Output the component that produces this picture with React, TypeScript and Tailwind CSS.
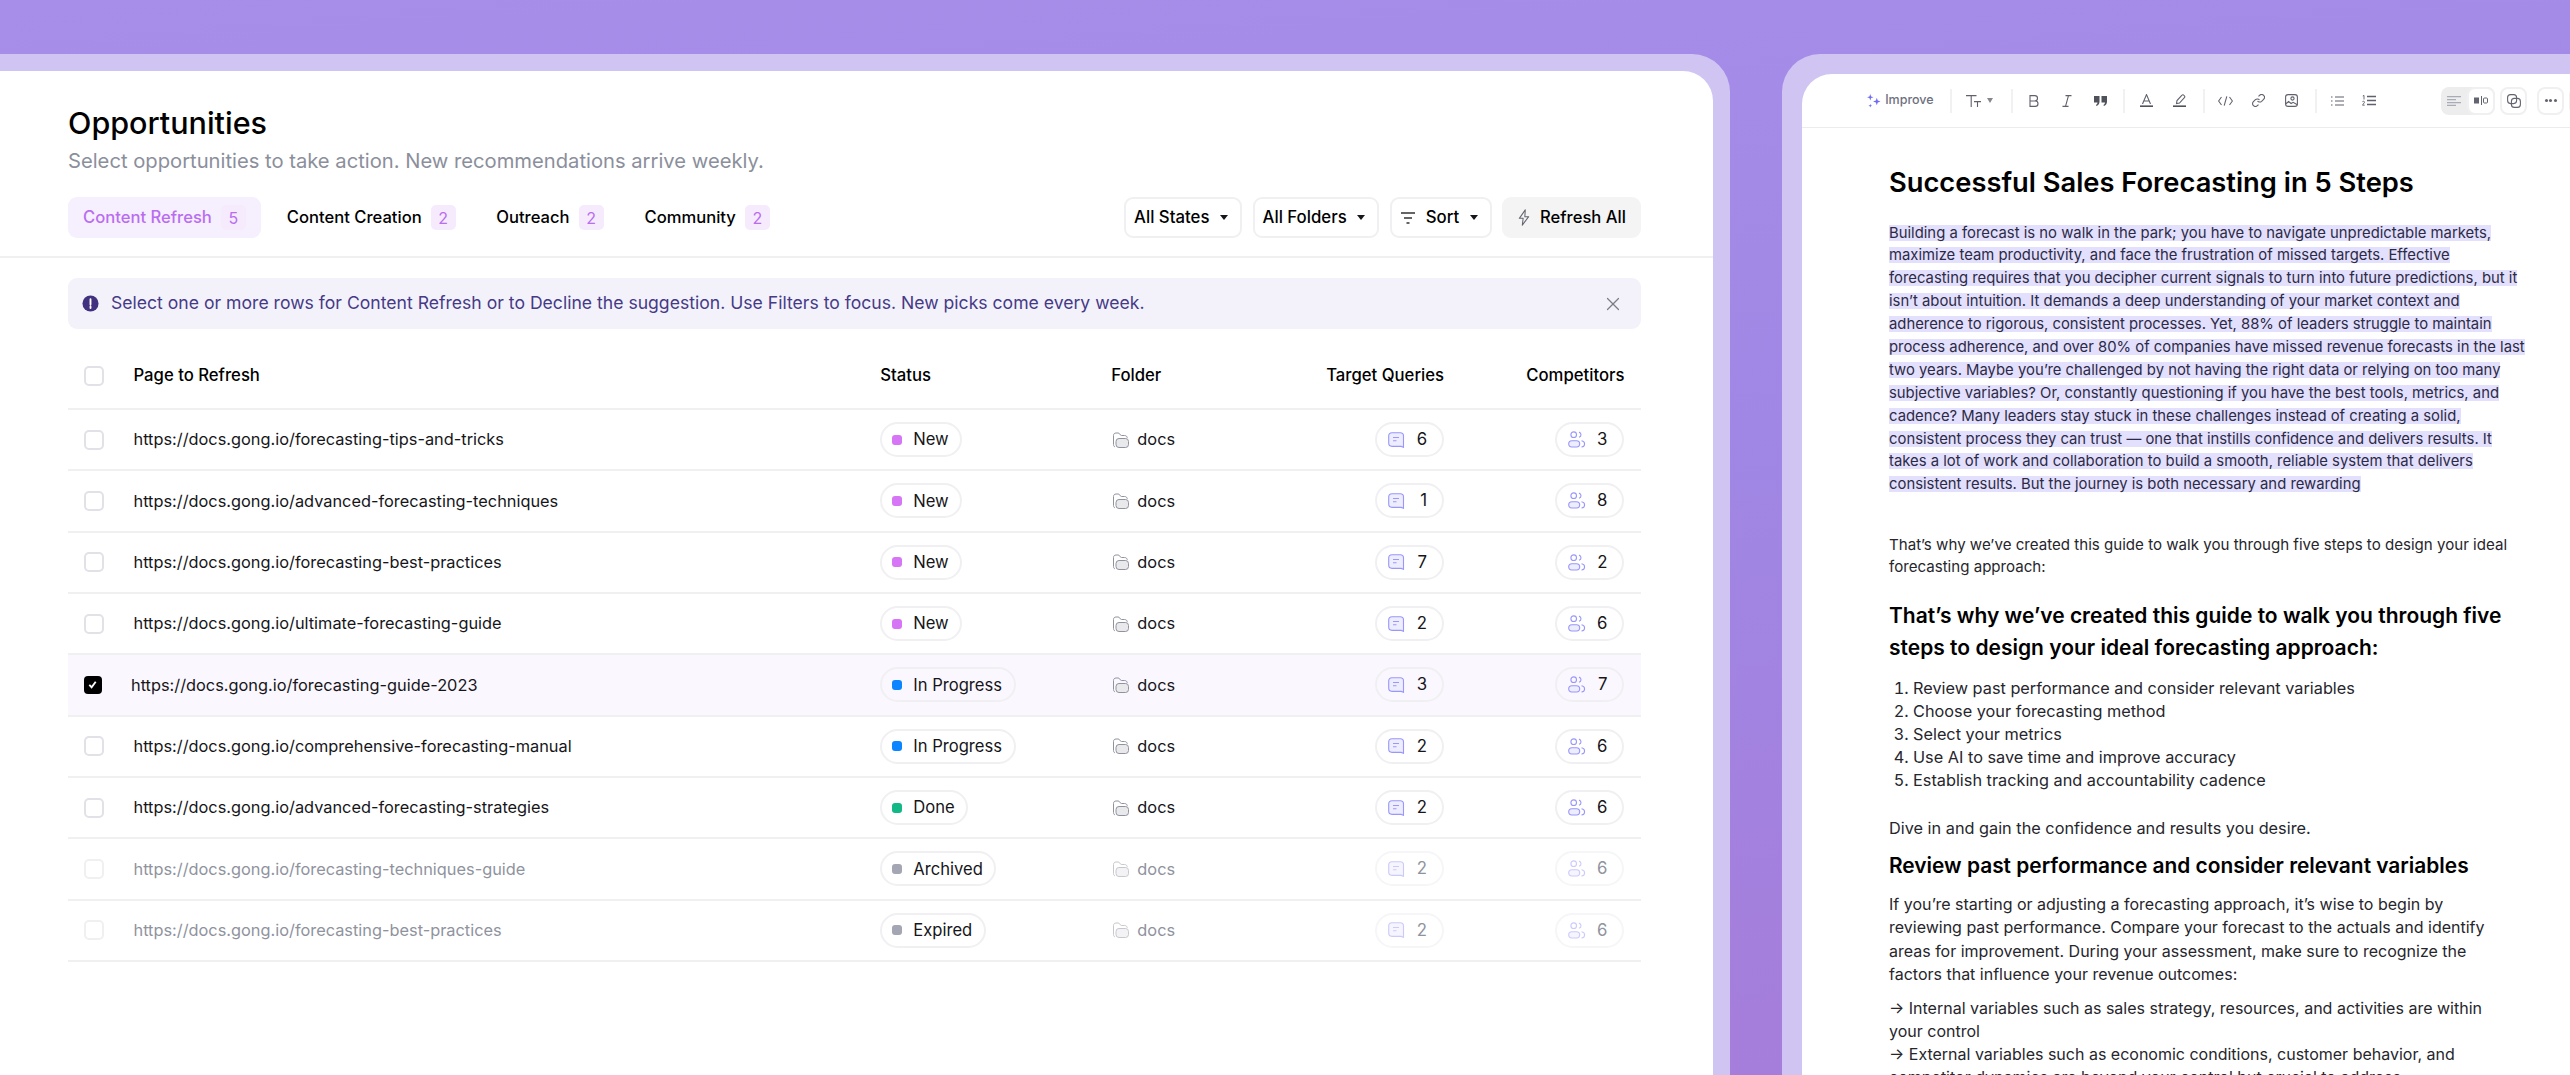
import { X } from 'lucide-react'
import type { ReactNode } from 'react'

type Row = { url: string; status: string; dot: string; queries: number; competitors: number; muted?: boolean; selected?: boolean }

const rows: Row[] = [
  { url: 'https://docs.gong.io/forecasting-tips-and-tricks', status: 'New', dot: 'bg-[#d675f5]', queries: 6, competitors: 3 },
  { url: 'https://docs.gong.io/advanced-forecasting-techniques', status: 'New', dot: 'bg-[#d675f5]', queries: 1, competitors: 8 },
  { url: 'https://docs.gong.io/forecasting-best-practices', status: 'New', dot: 'bg-[#d675f5]', queries: 7, competitors: 2 },
  { url: 'https://docs.gong.io/ultimate-forecasting-guide', status: 'New', dot: 'bg-[#d675f5]', queries: 2, competitors: 6 },
  { url: 'https://docs.gong.io/forecasting-guide-2023', status: 'In Progress', dot: 'bg-[#0a84ff]', queries: 3, competitors: 7, selected: true },
  { url: 'https://docs.gong.io/comprehensive-forecasting-manual', status: 'In Progress', dot: 'bg-[#0a84ff]', queries: 2, competitors: 6 },
  { url: 'https://docs.gong.io/advanced-forecasting-strategies', status: 'Done', dot: 'bg-[#12b886]', queries: 2, competitors: 6 },
  { url: 'https://docs.gong.io/forecasting-techniques-guide', status: 'Archived', dot: 'bg-[#a4a7b3]', queries: 2, competitors: 6, muted: true },
  { url: 'https://docs.gong.io/forecasting-best-practices', status: 'Expired', dot: 'bg-[#a4a7b3]', queries: 2, competitors: 6, muted: true },
]

const highlighted = [
  'Building a forecast is no walk in the park; you have to navigate unpredictable markets,',
  'maximize team productivity, and face the frustration of missed targets. Effective',
  'forecasting requires that you decipher current signals to turn into future predictions, but it',
  'isn’t about intuition. It demands a deep understanding of your market context and',
  'adherence to rigorous, consistent processes. Yet, 88% of leaders struggle to maintain',
  'process adherence, and over 80% of companies have missed revenue forecasts in the last',
  'two years. Maybe you’re challenged by not having the right data or relying on too many',
  'subjective variables? Or, constantly questioning if you have the best tools, metrics, and',
  'cadence? Many leaders stay stuck in these challenges instead of creating a solid,',
  'consistent process they can trust — one that instills confidence and delivers results. It',
  'takes a lot of work and collaboration to build a smooth, reliable system that delivers',
  'consistent results. But the journey is both necessary and rewarding',
]

function FolderIcon() {
  return (
    <svg width="16" height="16" viewBox="0 0 16 16" fill="none" stroke="#8f93a0" strokeWidth="1">
      <path d="M2 15C1 14.500.5 13.500.5 12.500v-9C.5 2 1.500 1 3 1h2c.8 0 1.300.3 1.700.9l.6.9c.3.4.8.7 1.300.7h3c1.500 0 2.500 1 2.700 2.300" />
      <rect x="3" y="6.500" width="12.500" height="9" rx="3" fill="#e9e9ec" />
    </svg>
  )
}

function QueryIcon() {
  return (
    <svg width="17" height="16" viewBox="0 0 17 16" fill="none" stroke="#9997fb" strokeWidth="1.100">
      <path d="M4 .7h8.300c1.800 0 3.200 1.400 3.200 3.200v11.400l-2.200-.9H4c-1.800 0-3.300-1.500-3.300-3.300V4C.7 2.200 2.200.7 4 .7z" fill="#eeedfe" />
      <path d="M5 5.500h6M5 8.700h3.500" />
    </svg>
  )
}

function PeopleIcon() {
  return (
    <svg width="18" height="17" viewBox="0 0 18 17" fill="none" stroke="#9997fb" strokeWidth="1.100">
      <circle cx="5.700" cy="3.700" r="2.800" />
      <path d="M11 1.100c1.300.4 2 1.400 2 2.600s-.7 2.200-2 2.600" />
      <rect x=".7" y="9.700" width="11" height="6.300" rx="3.150" fill="#eeedfe" />
      <path d="M13.500 9.800c1.800.3 3.100 1.500 3.100 3.100s-1.300 2.800-3.100 3.100" />
    </svg>
  )
}

function Checkbox({ checked, muted }: { checked?: boolean; muted?: boolean }) {
  if (checked) {
    return (
      <span className="flex h-[18px] w-[18px] items-center justify-center rounded-[4px] bg-black">
        <svg width="11" height="11" viewBox="0 0 12 12" fill="none" stroke="#fff" strokeWidth="2">
          <path d="M2.500 6.500 5 9l4.500-6" />
        </svg>
      </span>
    )
  }
  return <span className={`block h-5 w-5 rounded-[5px] border-2 ${muted ? 'border-[#f0f0f3]' : 'border-[#e1e2e8]'}`} />
}

function CountPill({ icon, n, muted }: { icon: ReactNode; n: number; muted?: boolean }) {
  return (
    <span className={`flex h-[35px] w-[69px] items-center justify-between rounded-full border-2 pl-[10.500px] pr-[15px] ${muted ? 'border-[#f6f6f8] text-[#8f939e]' : 'border-[#f0f0f2] text-[#16161a]'}`}>
      <span className={`flex ${muted ? 'opacity-50' : ''}`}>{icon}</span>
      <span className="text-[16.800px]">{n}</span>
    </span>
  )
}

function Tab({ label, n, active }: { label: string; n: number; active?: boolean }) {
  return (
    <div className={`flex h-[41px] items-center gap-[9px] rounded-[9px] px-[15px] text-[16.600px] font-medium ${active ? 'bg-[#f6effd] text-[#b96df0]' : 'text-black'}`}>
      {label}
      <span className="flex h-[25px] w-[25px] items-center justify-center rounded-[5px] bg-[#f6ebfd] text-[16px] font-normal text-[#b96df0]">{n}</span>
    </div>
  )
}

function Caret() {
  return <span className="h-0 w-0 border-x-[4px] border-t-[5px] border-x-transparent border-t-[#16161a]" />
}

function FilterBtn({ label, width, icon }: { label: string; width: string; icon?: boolean }) {
  return (
    <button className={`flex h-[41px] items-center justify-between rounded-[9px] border-2 border-[#f0f0f2] pl-[8px] pr-[12px] text-[16.800px] font-medium text-black ${width}`}>
      {icon && (
        <svg width="16" height="14" viewBox="0 0 16 14" fill="none" stroke="#333" strokeWidth="1.300">
          <path d="M1 2h14M4 7h8M6.500 12h3" />
        </svg>
      )}
      {label}
      <Caret />
    </button>
  )
}

function Sep() {
  return <span className="h-[24px] w-[2px] shrink-0 bg-[#f1f1f2]" />
}

function Slot({ children }: { children: ReactNode }) {
  return <span className="flex w-[33px] shrink-0 items-center justify-center">{children}</span>
}

function Toolbar() {
  const line = { fill: 'none', stroke: '#5f616c', strokeWidth: 1.100 }
  return (
    <div className="flex h-[54px] items-center border-b border-[#ececed] pl-[64.700px]">
      <svg width="14" height="14" viewBox="0 0 15 15" fill="#6f6cf6" className="shrink-0">
        <path d="M3.500 0l.9 2.600L7 3.500l-2.600.9L3.500 7l-.9-2.600L0 3.500l2.600-.9zM10.500 4l1 3 3 1-3 1-1 3-1-3-3-1 3-1zM3.500 10.500l.5 1.500 1.500.5-1.500.5-.5 1.500-.5-1.500-1.500-.5 1.500-.5z" />
      </svg>
      <span className="ml-[4.500px] w-[65px] shrink-0 text-[12.500px] font-medium text-[#6d7080]">Improve</span>
      <Sep />
      <svg className="ml-[13.500px] shrink-0" width="15" height="12" viewBox="0 0 15 12" {...line}>
        <path d="M0 .6h10.500M5.200 .6V12M8 6.600h7M11.500 6.600V12" />
      </svg>
      <span className="ml-[6px] mr-[18px] h-0 w-0 shrink-0 border-x-[3.500px] border-t-[5px] border-x-transparent border-t-[#85878f]" />
      <Sep />
      <span className="w-[5px] shrink-0" />
      <Slot>
        <svg width="10" height="12" viewBox="0 0 10 12" {...line}><path d="M1 .6h4.800a2.700 2.700 0 0 1 0 5.400H1zM1 6h5.300a2.700 2.700 0 0 1 0 5.400H1z" /></svg>
      </Slot>
      <Slot>
        <svg width="10" height="12" viewBox="0 0 10 12" {...line}><path d="M3.500 .6h6M.5 11.400h6M6.500 .6 3.500 11.400" /></svg>
      </Slot>
      <Slot>
        <svg width="13" height="10" viewBox="0 0 13 10" fill="#4f515b"><path d="M0 0h5.500v5.500c0 2.300-1 3.800-3 4.500l-.6-1c1-.5 1.500-1.300 1.600-2.500H0zM7.500 0H13v5.500c0 2.300-1 3.800-3 4.500l-.6-1c1-.5 1.500-1.300 1.600-2.500H7.500z" /></svg>
      </Slot>
      <span className="w-[6px] shrink-0" />
      <Sep />
      <span className="w-[5px] shrink-0" />
      <Slot>
        <svg width="13" height="13" viewBox="0 0 13 13" {...line}><path d="M2.500 10 6.500.6l4 9.400M3.800 7h5.400" /><rect x="0" y="11.400" width="13" height="1.600" fill="#4f515b" stroke="none" /></svg>
      </Slot>
      <Slot>
        <svg width="13" height="13" viewBox="0 0 13 13" {...line}><path d="M3.500 9.500 4 6.500 9 1.200a1.200 1.200 0 0 1 1.800 0l.6.6a1.200 1.200 0 0 1 0 1.800L6.500 9z" /><rect x="0" y="11.400" width="13" height="1.600" fill="#4f515b" stroke="none" /></svg>
      </Slot>
      <span className="w-[7px] shrink-0" />
      <Sep />
      <span className="w-[4.500px] shrink-0" />
      <Slot>
        <svg width="15" height="10" viewBox="0 0 15 10" {...line}><path d="M3.500 1 .6 5l2.900 4M11.500 1l2.900 4-2.900 4M8.800.3 6.200 9.700" /></svg>
      </Slot>
      <Slot>
        <svg width="13" height="13" viewBox="0 0 13 13" {...line}><path d="M5.500 7a2.800 2.800 0 0 0 4.100.3l2-2a2.800 2.800 0 0 0-4-4L6.500 2.400M7.500 6a2.800 2.800 0 0 0-4.100-.3l-2 2a2.800 2.800 0 0 0 4 4l1.100-1.100" /></svg>
      </Slot>
      <Slot>
        <svg width="13" height="13" viewBox="0 0 13 13" {...line}><rect x=".6" y=".6" width="11.800" height="11.800" rx="2.500" /><circle cx="7.500" cy="4.500" r="1.600" /><path d="M.6 10l3-2.500 2.500 2 2-1.200 4.300 2.500" /></svg>
      </Slot>
      <span className="w-[6.500px] shrink-0" />
      <Sep />
      <span className="w-[4.500px] shrink-0" />
      <span className="flex w-[32px] shrink-0 items-center justify-center">
        <svg width="13" height="10" viewBox="0 0 13 10" {...line}><path d="M4 1h9M4 5h9M4 9h9M0 1h1.500M0 5h1.500M0 9h1.500" /></svg>
      </span>
      <span className="flex w-[32px] shrink-0 items-center justify-center">
        <svg width="14" height="11" viewBox="0 0 14 11" {...line}><path d="M5 1.500h9M5 5.500h9M5 9.500h9" strokeWidth="1.500" /><path d="M.8 1 2 .4V4.500M.4 7c.3-1 2.300-.9 2.100.3L.5 10.200h2.200" strokeWidth=".9" /></svg>
      </span>
      <div className="ml-[56px] flex h-[28px] w-[54px] shrink-0 rounded-[8px] bg-[#ededee]">
        <span className="flex w-[26px] items-center justify-center">
          <svg width="14" height="10" viewBox="0 0 14 10" stroke="#a9acb5" strokeWidth="1.300"><path d="M0 .7h14M0 3.700h9M0 6.700h14M0 9.300h9" /></svg>
        </span>
        <span className="flex w-[28px] items-center justify-center rounded-[8px] border-2 border-[#f0f0f2] bg-white">
          <svg width="14" height="9" viewBox="0 0 14 9" fill="none" stroke="#62646f"><rect x="0" y="1.500" width="5" height="6" fill="#62646f" stroke="none" /><path d="M7.500 0v9" /><rect x="9.500" y="2" width="4" height="5" rx="1" /></svg>
        </span>
      </div>
      <span className="ml-[5px] flex h-[28px] w-[27px] shrink-0 items-center justify-center rounded-[8px] border-2 border-[#f0f0f2]">
        <svg width="14" height="14" viewBox="0 0 14 14" fill="none" stroke="#62646f" strokeWidth="1.100"><rect x=".6" y=".6" width="9" height="9" rx="3" /><rect x="4.400" y="4.400" width="9" height="9" rx="3" /></svg>
      </span>
      <span className="ml-[10px] flex h-[28px] w-[27px] shrink-0 items-center justify-center gap-[1.500px] rounded-[8px] border-2 border-[#f0f0f2]">
        <span className="h-[3px] w-[3px] rounded-full bg-[#62646f]" />
        <span className="h-[3px] w-[3px] rounded-full bg-[#62646f]" />
        <span className="h-[3px] w-[3px] rounded-full bg-[#62646f]" />
      </span>
      <span className="ml-[5px] h-[28px] w-[27px] shrink-0 rounded-[8px] border-2 border-[#f0f0f2]" />
    </div>
  )
}

export default function App() {
  return (
    <div className="flex h-[1075px] w-[2570px] overflow-hidden bg-[linear-gradient(175deg,#a68ee9_0%,#a087e5_45%,#a67cd9_100%)] pt-[54px] font-['Inter',sans-serif] antialiased">
      {/* Opportunities panel */}
      <div className="h-[1100px] w-[1730px] shrink-0 rounded-tr-[38px] bg-[#d0c5f2] pr-[17px] pt-[17px]">
        <div className="h-full rounded-tr-[30px] bg-white">
          <div className="border-b-2 border-[#f0f0f1] pb-[18px] pl-[68px] pr-[72px] pt-[33px]">
            <h1 className="text-[30.500px] font-medium leading-[38px] text-black">Opportunities</h1>
            <p className="mt-[5px] text-[20.200px] leading-[28px] text-[#8b8f9c]">Select opportunities to take action. New recommendations arrive weekly.</p>
            <div className="mt-[22px] flex items-center">
              <Tab label="Content Refresh" n={5} active />
              <span className="w-[11px]" />
              <Tab label="Content Creation" n={2} />
              <span className="w-[10.500px]" />
              <Tab label="Outreach" n={2} />
              <span className="w-[11px]" />
              <Tab label="Community" n={2} />
              <div className="ml-auto flex gap-[10.500px]">
                <FilterBtn label="All States" width="w-[118px]" />
                <FilterBtn label="All Folders" width="w-[126.500px]" />
                <FilterBtn label="Sort" width="w-[102px]" icon />
                <button className="flex h-[41px] w-[139px] items-center gap-[9px] rounded-[9px] bg-[#f4f4f5] pl-[15px] text-[16.600px] font-medium text-black">
                  <svg width="14" height="17" viewBox="0 0 15 20" fill="none" stroke="#62646f" strokeWidth="1.200"><path d="M9 1 2 11h4.500L5.500 19 13 9H8.500z" strokeLinejoin="round" /></svg>
                  Refresh All
                </button>
              </div>
            </div>
          </div>

          <div className="pl-[68px] pr-[72px] pt-[20px]">
            <div className="flex h-[51px] items-center rounded-[9px] bg-[#f3f2fb] pl-[14px] pr-[17.500px] text-[17.600px] text-[#463a87]">
              <svg width="17" height="17" viewBox="0 0 18 18" className="mr-[12px]">
                <circle cx="9" cy="9" r="8.500" fill="#41317f" />
                <path d="M9 4.500v5.500M9 12.200v1.500" stroke="#fff" strokeWidth="2" strokeLinecap="round" />
              </svg>
              Select one or more rows for Content Refresh or to Decline the suggestion. Use Filters to focus. New picks come every week.
              <X className="ml-auto h-[22px] w-[22px] text-[#7a7d88]" strokeWidth={1.300} />
            </div>

            <div className="mt-[14px] flex h-[67px] items-center border-b-2 border-[#f0f0f1] pr-[16.500px] text-[16.700px] font-medium text-black">
              <span className="w-[65.500px] pl-[15.500px]"><Checkbox /></span>
              <span className="w-[747px]">Page to Refresh</span>
              <span className="w-[231px]">Status</span>
              <span className="w-[130px]">Folder</span>
              <span className="w-[203px] text-right">Target Queries</span>
              <span className="w-[180.500px] text-right">Competitors</span>
            </div>

            {rows.map((r, i) => (
              <div key={i} className={`flex h-[61.330px] items-center border-b-2 border-[#f0f0f1] pr-[16.500px] text-[16.350px] ${r.selected ? 'bg-[#fbf7fe]' : ''}`}>
                <span className="w-[65.500px] pl-[15.500px]"><Checkbox checked={r.selected} muted={r.muted} /></span>
                <span className={`w-[747px] ${r.muted ? 'text-[#8f939e]' : 'text-[#16161a]'} ${r.selected ? '-ml-[2.500px] mr-[2.500px]' : ''}`}>{r.url}</span>
                <span className="w-[231px]">
                  <span className="inline-flex h-[35px] items-center gap-[11px] rounded-full border-2 border-[#f0f0f2] pl-[10px] pr-[11.500px] text-[16.600px] text-[#16161a]">
                    <span className={`h-[10px] w-[10px] rounded-[3px] ${r.dot}`} />
                    {r.status}
                  </span>
                </span>
                <span className={`flex w-[130px] items-center gap-[8.500px] pl-[1.700px] ${r.muted ? 'text-[#8f939e]' : 'text-[#16161a]'}`}>
                  <span className={`flex ${r.muted ? 'opacity-50' : ''}`}><FolderIcon /></span>
                  docs
                </span>
                <span className="flex w-[203px] justify-end">
                  <CountPill icon={<QueryIcon />} n={r.queries} muted={r.muted} />
                </span>
                <span className="flex w-[180.500px] justify-end">
                  <CountPill icon={<PeopleIcon />} n={r.competitors} muted={r.muted} />
                </span>
              </div>
            ))}
          </div>
        </div>
      </div>

      {/* Editor panel */}
      <div className="ml-[52px] h-[1100px] w-[788px] shrink-0 overflow-hidden rounded-tl-[38px] bg-[#d0c5f2] pl-[20px] pt-[20px]">
        <div className="h-full overflow-hidden rounded-tl-[30px] bg-white">
          <Toolbar />
          <div className="pl-[87px] pr-[48px] text-[16px] text-[#26262c]">
            <h1 className="pt-[37px] text-[27.300px] font-semibold leading-[36px] text-black">Successful Sales Forecasting in 5 Steps</h1>
            <div className="mt-[23.500px]">
              {highlighted.map((line, i) => (
                <span key={i} className="mb-[6.900px] block h-[16px] w-fit whitespace-nowrap bg-[#e3e0fd] text-[14.850px] leading-[16px] text-[#2c2a45]">{line}</span>
              ))}
            </div>
            <p className="mt-[42.200px] text-[15.100px] leading-[22px]">That’s why we’ve created this guide to walk you through five steps to design your ideal forecasting approach:</p>
            <h2 className="mt-[21.300px] text-[21px] font-semibold leading-[32.300px] text-black">That’s why we’ve created this guide to walk you through five steps to design your ideal forecasting approach:</h2>
            <ol className="mt-[12.500px] list-decimal pl-[24px] text-[16.300px] leading-[23px]">
              <li>Review past performance and consider relevant variables</li>
              <li>Choose your forecasting method</li>
              <li>Select your metrics</li>
              <li>Use AI to save time and improve accuracy</li>
              <li>Establish tracking and accountability cadence</li>
            </ol>
            <p className="mt-[25px] text-[16.300px] leading-[23px]">Dive in and gain the confidence and results you desire.</p>
            <h3 className="mt-[11.500px] text-[20.900px] font-semibold leading-[30px] text-black">Review past performance and consider relevant variables</h3>
            <div className="max-w-[621px] leading-[23.200px]">
              <p className="mt-[11.800px]">If you’re starting or adjusting a forecasting approach, it’s wise to begin by reviewing past performance. Compare your forecast to the actuals and identify areas for improvement. During your assessment, make sure to recognize the factors that influence your revenue outcomes:</p>
              <p className="mt-[10.800px]">→ Internal variables such as sales strategy, resources, and activities are within your control</p>
              <p>→ External variables such as economic conditions, customer behavior, and competitor dynamics are beyond your control but crucial to address.</p>
            </div>
          </div>
        </div>
      </div>
    </div>
  )
}
